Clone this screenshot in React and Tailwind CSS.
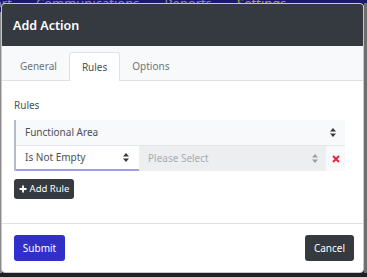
import React from "react";

function Caret({ color = "#343a40" }) {
  return (
    <svg width="6" height="9" viewBox="0 0 6 9" className="shrink-0">
      <path d="M3 0 L6 3.4 L0 3.4 Z" fill={color} />
      <path d="M3 9 L6 5.6 L0 5.6 Z" fill={color} />
    </svg>
  );
}

export default function App() {
  return (
    <div
      className="relative w-[367px] h-[277px] overflow-hidden bg-[#1f2124]"
      style={{ fontFamily: '"Noto Sans", "Open Sans", sans-serif' }}
    >
      {/* background nav */}
      <div className="absolute left-0 top-0 w-full h-[12px] bg-[#1c1a6e] overflow-hidden">
        <div className="flex items-end h-[3px] text-[13px] leading-none text-[#8a8ab0] whitespace-nowrap">
          <span className="ml-[-6px] translate-y-[7px]">ort</span>
          <span className="ml-[24px] translate-y-[7px]">Communications</span>
          <span className="ml-[25px] translate-y-[7px]">Reports</span>
          <span className="ml-[25px] translate-y-[7px] text-[#a8a83a]">Settings</span>
        </div>
      </div>
      <div className="absolute left-0 top-[12px] w-[2px] h-[261px] bg-[#8a8a8a]" />
      <div className="absolute right-0 top-[3px] w-[3px] h-[270px] bg-[#6e6e6e]" />

      {/* modal */}
      <div className="absolute left-[1px] top-[3px] w-[363px] h-[270px] bg-white border border-[#c8c8c8] rounded-[4px] overflow-hidden flex flex-col">
        <div className="h-[42px] shrink-0 bg-[#343a40] flex items-center px-[11px] pt-[2px]">
          <span className="text-white text-[12.5px] font-semibold">Add Action</span>
        </div>

        <div className="h-[35px] shrink-0 bg-[#f8f9fa] border-b border-[#dee2e6] flex items-end pl-[6px]">
          <div className="h-[28px] px-[12px] flex items-center text-[10px] text-[#6c757d]">General</div>
          <div className="h-[29px] mb-[-1px] px-[12px] flex items-center text-[10px] text-[#495057] bg-white border border-b-0 border-[#dee2e6] rounded-t-[3px]">
            Rules
          </div>
          <div className="h-[28px] px-[12px] flex items-center text-[10px] text-[#6c757d]">Options</div>
        </div>

        <div className="flex-1 pl-[12px] pt-[17px]">
          <div className="text-[10px] text-[#495057] leading-[15px]">Rules</div>
          <div className="mt-[7px] w-[331px] border-l-2 border-[#b6bdc9] flex flex-col">
            <div className="h-[26px] bg-[#f8f9fa] border-b border-[#e3e6ea] flex items-center justify-between pl-[9px] pr-[9px]">
              <span className="text-[10px] text-[#495057]">Functional Area</span>
              <Caret />
            </div>
            <div className="h-[25px] flex">
              <div className="w-[123px] bg-white border-b-2 border-[#9c9ce8] flex items-center justify-between pl-[9px] pr-[10px]">
                <span className="text-[10px] text-[#495057]">Is Not Empty</span>
                <Caret />
              </div>
              <div className="w-[187px] bg-[#eceef0] flex items-center justify-between pl-[9px] pr-[8px]">
                <span className="text-[10px] text-[#a8adb3]">Please Select</span>
                <Caret color="#9aa0a6" />
              </div>
              <div className="flex-1 bg-[#f8f9fa] flex items-center justify-center">
                <svg width="8" height="8" viewBox="0 0 8 8">
                  <path d="M1 1 L7 7 M7 1 L1 7" stroke="#e8223c" strokeWidth="2" />
                </svg>
              </div>
            </div>
          </div>
          <div className="mt-[8px] w-[60px] h-[20px] bg-[#343a40] rounded-[3px] flex items-center justify-center gap-[3px] text-white">
            <svg width="8" height="8" viewBox="0 0 8 8">
              <path d="M4 0.5 V7.5 M0.5 4 H7.5" stroke="white" strokeWidth="1.8" />
            </svg>
            <span className="text-[9.5px] leading-none">Add Rule</span>
          </div>
        </div>

        <div className="h-[49px] shrink-0 border-t border-[#dee2e6] flex items-center justify-between pl-[12px] pr-[9px]">
          <div className="w-[51px] h-[26px] bg-[#3030c8] rounded-[3px] flex items-center justify-center text-white text-[10px]">
            Submit
          </div>
          <div className="w-[49px] h-[26px] bg-[#343a40] rounded-[3px] flex items-center justify-center text-white text-[10px]">
            Cancel
          </div>
        </div>
      </div>
    </div>
  );
}
